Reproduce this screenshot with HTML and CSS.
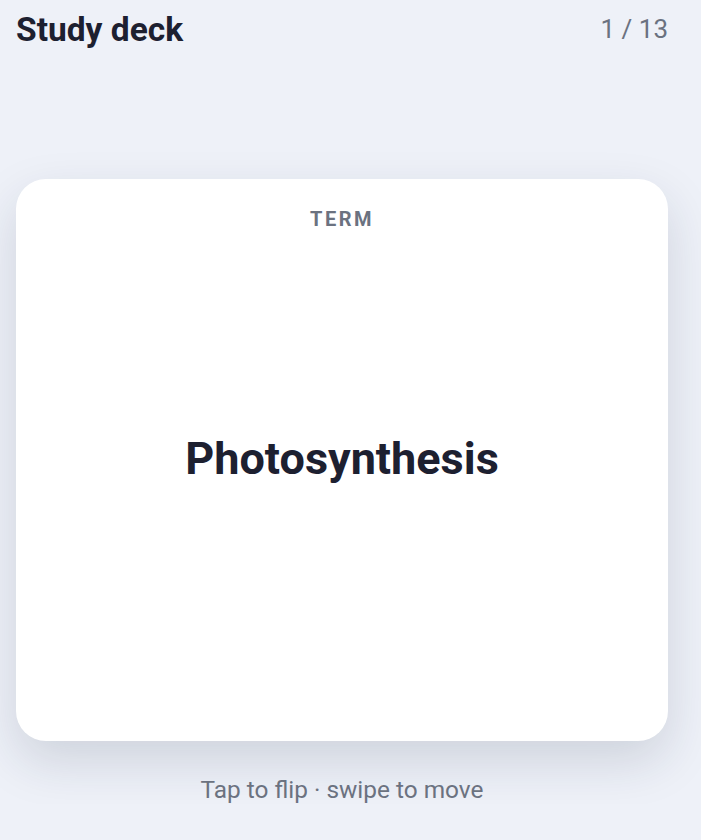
FILE: index.html
```html
<!DOCTYPE html>
<html lang="en">
<head>
<meta charset="utf-8">
<title>Study deck</title>
<link rel="stylesheet" href="styles.css">
</head>
<body>
<div class="app">
  <header class="top">
    <h1 class="title">Study deck</h1>
    <span class="count">1 / 13</span>
  </header>
  <main class="stage">
    <section class="card">
      <div class="label">TERM</div>
      <div class="term">Photosynthesis</div>
    </section>
    <p class="hint">Tap to flip · swipe to move</p>
  </main>
</div>
</body>
</html>
```
FILE: styles.css
```css
html, body {
  margin: 0;
  padding: 0;
  background: #eef1f8;
  font-family: Roboto, "Liberation Sans", sans-serif;
}
.app {
  width: 652px;
  padding: 0 33px 0 16px;
  display: flex;
  flex-direction: column;
}
.top {
  display: flex;
  justify-content: space-between;
  align-items: center;
  height: 58px;
}
.title {
  margin: 0;
  font-size: 33.5px;
  font-weight: 700;
  color: #1d2030;
}
.count {
  font-size: 26px;
  color: #6b7280;
}
.stage {
  display: flex;
  flex-direction: column;
  align-items: center;
  padding-top: 121px;
}
.card {
  width: 100%;
  height: 562px;
  background: #ffffff;
  border-radius: 30px;
  box-shadow: 0 20px 50px rgba(30, 40, 70, 0.15);
  display: flex;
  flex-direction: column;
  align-items: center;
  box-sizing: border-box;
  padding-top: 28px;
}
.label {
  font-size: 20px;
  font-weight: 700;
  letter-spacing: 2.5px;
  color: #6b7280;
}
.term {
  flex: 1;
  display: flex;
  align-items: center;
  padding-bottom: 56px;
  font-size: 45px;
  font-weight: 700;
  color: #1d2030;
}
.hint {
  margin: 34px 0 0;
  font-size: 24.4px;
  color: #6b7280;
}
```
